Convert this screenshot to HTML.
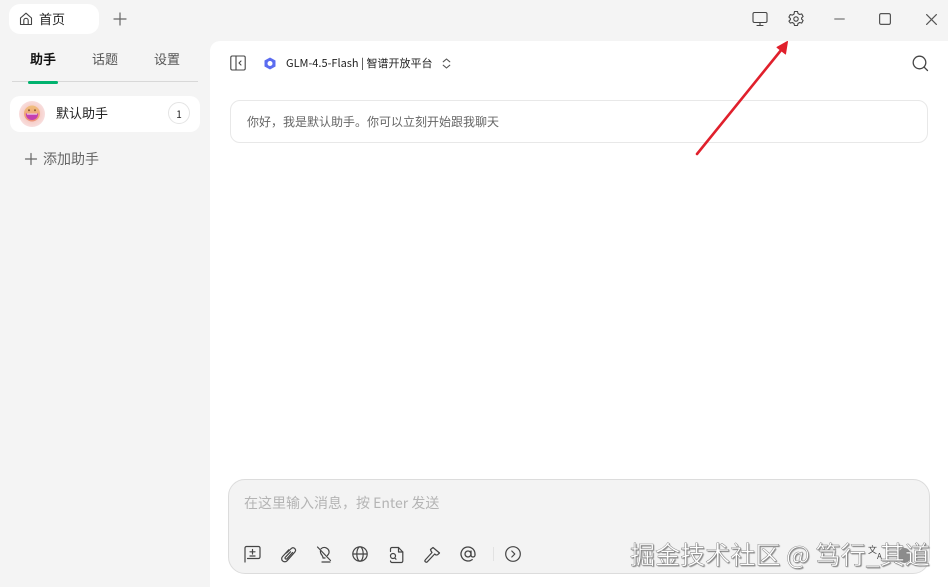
<!DOCTYPE html>
<html lang="zh">
<head>
<meta charset="utf-8">
<style>
html,body{margin:0;padding:0}
body{width:948px;height:587px;overflow:hidden;background:#f4f4f4;position:relative;font-family:"Noto Sans CJK SC","Liberation Sans",sans-serif;color:#222}
.a{position:absolute;white-space:nowrap}
svg.a{overflow:visible;fill:none;stroke-linecap:round;stroke-linejoin:round}
</style>
</head>
<body>
<!-- Title tab -->
<div class="a" style="left:9px;top:4px;width:90px;height:30px;background:#fff;border-radius:11px"></div>
<svg class="a" style="left:19px;top:12px" width="14" height="14" viewBox="0 0 14 14" stroke="#444" stroke-width="1.100"><path d="M1.500 6 7 1.200 12.500 6V12.500H1.500Z"/><path d="M4.800 12.500V8.500a2.200 2.200 0 0 1 4.400 0v4"/></svg>
<div class="a" style="left:39px;top:10px;font-size:13px;line-height:18px;color:#222">首页</div>
<svg class="a" style="left:113px;top:12px" width="14" height="14" viewBox="0 0 14 14" stroke="#666" stroke-width="1.200"><path d="M7 1v12M1 7h12"/></svg>

<!-- Sidebar tabs -->
<div class="a" style="left:30px;top:50px;font-size:13px;line-height:18px;color:#111;font-weight:700">助手</div>
<div class="a" style="left:92px;top:50px;font-size:13px;line-height:18px;color:#555">话题</div>
<div class="a" style="left:154px;top:50px;font-size:13px;line-height:18px;color:#555">设置</div>
<div class="a" style="left:12px;top:81px;width:186px;height:1px;background:#d8d8d8"></div>
<div class="a" style="left:28px;top:81px;width:30px;height:3px;background:#00b26e;border-radius:2px"></div>

<!-- Assistant item -->
<div class="a" style="left:10px;top:96px;width:190px;height:36px;background:#fff;border-radius:10px"></div>
<svg class="a" style="left:19px;top:101px" width="26" height="26" viewBox="0 0 26 26">
<defs><radialGradient id="av" cx="50%" cy="50%" r="50%"><stop offset="0" stop-color="#f3b7a8"/><stop offset="1" stop-color="#f8dede"/></radialGradient>
<linearGradient id="fc" x1="0" y1="0" x2="0" y2="1"><stop offset="0" stop-color="#f0c07c"/><stop offset="1" stop-color="#ee8f78"/></linearGradient></defs>
<circle cx="13" cy="13" r="13" fill="url(#av)"/>
<circle cx="13" cy="12.500" r="8" fill="url(#fc)"/>
<path d="M6.800 12.500h12.400c0 4-2.700 6.500-6.200 6.500s-6.200-2.500-6.200-6.500Z" fill="#c43fb0"/>
<path d="M8 12.500h10v1.200H8Z" fill="#fff" opacity=".7"/>
<circle cx="10" cy="9.300" r="1" fill="#8a5a30"/><circle cx="16" cy="9.300" r="1" fill="#8a5a30"/>
</svg>
<div class="a" style="left:56px;top:104px;font-size:13px;line-height:18px;color:#222">默认助手</div>
<div class="a" style="left:168px;top:102px;width:20px;height:20px;border:1px solid #e4e4e4;border-radius:50%;text-align:center;font-size:10px;line-height:21px;color:#222">1</div>

<!-- Add assistant -->
<svg class="a" style="left:25px;top:153px" width="12" height="12" viewBox="0 0 12 12" stroke="#666" stroke-width="1.200"><path d="M6 .5v11M.5 6h11"/></svg>
<div class="a" style="left:43px;top:150px;font-size:14px;line-height:19px;color:#666">添加助手</div>

<!-- Main panel -->
<div class="a" style="left:210px;top:41px;width:738px;height:546px;background:#fff;border-top-left-radius:10px"></div>

<!-- Top window icons -->
<svg class="a" style="left:752px;top:11px" width="16" height="16" viewBox="0 0 16 16" stroke="#444" stroke-width="1.100"><rect x="1" y="1.500" width="14" height="10" rx="1.500"/><path d="M8 11.500v3M5 14.500h6"/></svg>
<svg class="a" style="left:788px;top:11px" width="16" height="16" viewBox="0 0 16 16" stroke="#444" stroke-width="1.100"><path d="M6.500 1h3l.5 2 1.700 1 2-.6 1.400 2.600-1.500 1.400v1.200l1.500 1.400-1.400 2.600-2-.6-1.700 1-.5 2h-3l-.5-2-1.700-1-2 .6L.9 10.600l1.500-1.400V8L.9 6.600 2.300 4l2 .6L6 3.600Z" transform="translate(0 -.5)"/><circle cx="8" cy="8" r="2.200"/></svg>
<svg class="a" style="left:834px;top:18px" width="11" height="2" viewBox="0 0 11 2" stroke="#777" stroke-width="1.300"><path d="M.8 1h9.400"/></svg>
<svg class="a" style="left:879px;top:13px" width="12" height="12" viewBox="0 0 12 12" stroke="#555" stroke-width="1.200"><rect x=".6" y=".6" width="10.800" height="10.800" rx="1.500"/></svg>
<svg class="a" style="left:926px;top:14px" width="11" height="11" viewBox="0 0 11 11" stroke="#555" stroke-width="1.200"><path d="M.6.6l9.800 9.800M10.400.6.6 10.400"/></svg>

<!-- Chat header -->
<svg class="a" style="left:230px;top:55px" width="16" height="16" viewBox="0 0 16 16" stroke="#444" stroke-width="1.100"><rect x=".8" y="1" width="14.400" height="14" rx="1.500"/><path d="M6 1v14M11 6 9 8l2 2"/></svg>
<svg class="a" style="left:264px;top:57px" width="12" height="13" viewBox="0 0 12 13"><path d="M6 .5 11.500 3.500v6L6 12.500.5 9.500v-6Z" fill="#5b6cf0"/><circle cx="6" cy="6.500" r="2.500" fill="#fff"/></svg>
<div class="a" style="left:286px;top:55px;font-size:11px;line-height:16px;color:#222">GLM-4.5-Flash | 智谱开放平台</div>
<svg class="a" style="left:442px;top:58px" width="9" height="11" viewBox="0 0 9 11" stroke="#555" stroke-width="1.100"><path d="M1.200 3.800 4.500 1 7.800 3.800M1.200 7.200 4.500 10 7.800 7.200"/></svg>
<svg class="a" style="left:912px;top:55px" width="17" height="17" viewBox="0 0 17 17" stroke="#444" stroke-width="1.300"><circle cx="7.500" cy="7.500" r="6.300"/><path d="M12.300 12.300 15.500 15.500"/></svg>

<!-- Greeting -->
<div class="a" style="left:230px;top:100px;width:696px;height:41px;border:1px solid #e8e8e8;border-radius:10px;background:#fff"></div>
<div class="a" style="left:247px;top:113px;font-size:12px;line-height:17px;color:#666">你好，我是默认助手。你可以立刻开始跟我聊天</div>

<!-- Arrow -->
<svg class="a" style="left:0;top:0" width="948" height="587"><path d="M697 154 782 49" stroke="#e0202c" stroke-width="2.600"/><path d="M787.500 41.500 785.500 54 777 47.300Z" fill="#e0202c" stroke="#e0202c" stroke-width="1"/></svg>

<!-- Input -->
<div class="a" style="left:228px;top:479px;width:700px;height:93px;background:#f3f3f3;border:1px solid #dcdcdc;border-radius:17px"></div>
<div class="a" style="left:244px;top:493px;font-size:14px;line-height:20px;color:#b4b4b4">在这里输入消息，按 Enter 发送</div>

<svg class="a" style="left:244px;top:545px" width="17" height="18" viewBox="0 0 17 18" stroke="#444" stroke-width="1.200"><path d="M1 17V3a1.500 1.500 0 0 1 1.500-1.500h12A1.500 1.500 0 0 1 16 3v9a1.500 1.500 0 0 1-1.500 1.500H3.500"/><path d="M8.500 4.500v4.500M6 6.800h5M6 11h5"/></svg>
<svg class="a" style="left:280px;top:546px" width="17" height="17" viewBox="0 0 17 17" stroke="#444" stroke-width="1.200"><path d="M6.500 7 11.500 2.300a2.500 2.500 0 0 1 3.500 3.500L7 14.800a3 3 0 0 1-4.500-4.200L8.800 3.800M10.500 5.800 5.300 11.300a1.100 1.100 0 0 0 1.600 1.500L12.500 6.500"/></svg>
<svg class="a" style="left:316px;top:546px" width="16" height="17" viewBox="0 0 16 17" stroke="#444" stroke-width="1.200"><path d="M1.500 1 14.500 14.500M5 2.800a4.800 4.800 0 0 1 8 4.200c-.3 1-1 1.800-1.600 2.500M4.500 4.500c-.5 2 .5 3.500 1.500 4.800.6.800 1 1.700 1 2.700h2M6 16h8"/></svg>
<svg class="a" style="left:352px;top:546px" width="16" height="16" viewBox="0 0 16 16" stroke="#444" stroke-width="1.200"><circle cx="8" cy="8" r="7.200"/><ellipse cx="8" cy="8" rx="3.200" ry="7.200"/><path d="M1 8h14"/></svg>
<svg class="a" style="left:388px;top:546px" width="16" height="17" viewBox="0 0 16 17" stroke="#444" stroke-width="1.200"><path d="M2.500 5.500V3a1.500 1.500 0 0 1 1.500-1.500H10.500L14.800 6v9a1.500 1.500 0 0 1-1.500 1.500H4a1.500 1.500 0 0 1-1.500-1.500"/><path d="M10.500 1.500V6h4.300"/><circle cx="5" cy="10" r="2.500"/><path d="M6.800 12 8 13.200"/></svg>
<svg class="a" style="left:424px;top:546px" width="17" height="17" viewBox="0 0 17 17" stroke="#444" stroke-width="1.200"><path d="M6.500 3.500 9 1.500l6.500 5.500-2 1.800-1.500.2-1.300-1L3.300 15.800a1.300 1.300 0 0 1-2-1.900L8 6.500 7 5Z"/></svg>
<svg class="a" style="left:460px;top:546px" width="16" height="16" viewBox="0 0 16 16" stroke="#444" stroke-width="1.300"><circle cx="8" cy="8" r="3"/><path d="M11 5v4a2 2 0 0 0 4 0V8a7 7 0 1 0-2.800 5.600"/></svg>
<div class="a" style="left:493px;top:547px;width:1px;height:14px;background:#e2e2e2"></div>
<svg class="a" style="left:505px;top:546px" width="16" height="16" viewBox="0 0 16 16" stroke="#444" stroke-width="1.200"><circle cx="8" cy="8" r="7.300"/><path d="M6.800 5 9.800 8l-3 3"/></svg>

<!-- Right bottom icons under the watermark -->
<div class="a" style="left:868px;top:544px;font-size:9px;line-height:11px;color:#444">文</div>
<div class="a" style="left:877px;top:552px;font-size:8px;line-height:9px;color:#444">A</div>
<div class="a" style="left:898px;top:548px;width:13px;height:15px;background:#8c8c8c;border-radius:50%"></div>

<!-- Watermark -->
<div class="a" style="left:630px;top:537px;font-size:25.100px;line-height:34px;color:#fff;-webkit-text-stroke:.4px #777;text-shadow:1px 1px 1px #888">掘金技术社区 @ 笃行_其道</div>
</body>
</html>
